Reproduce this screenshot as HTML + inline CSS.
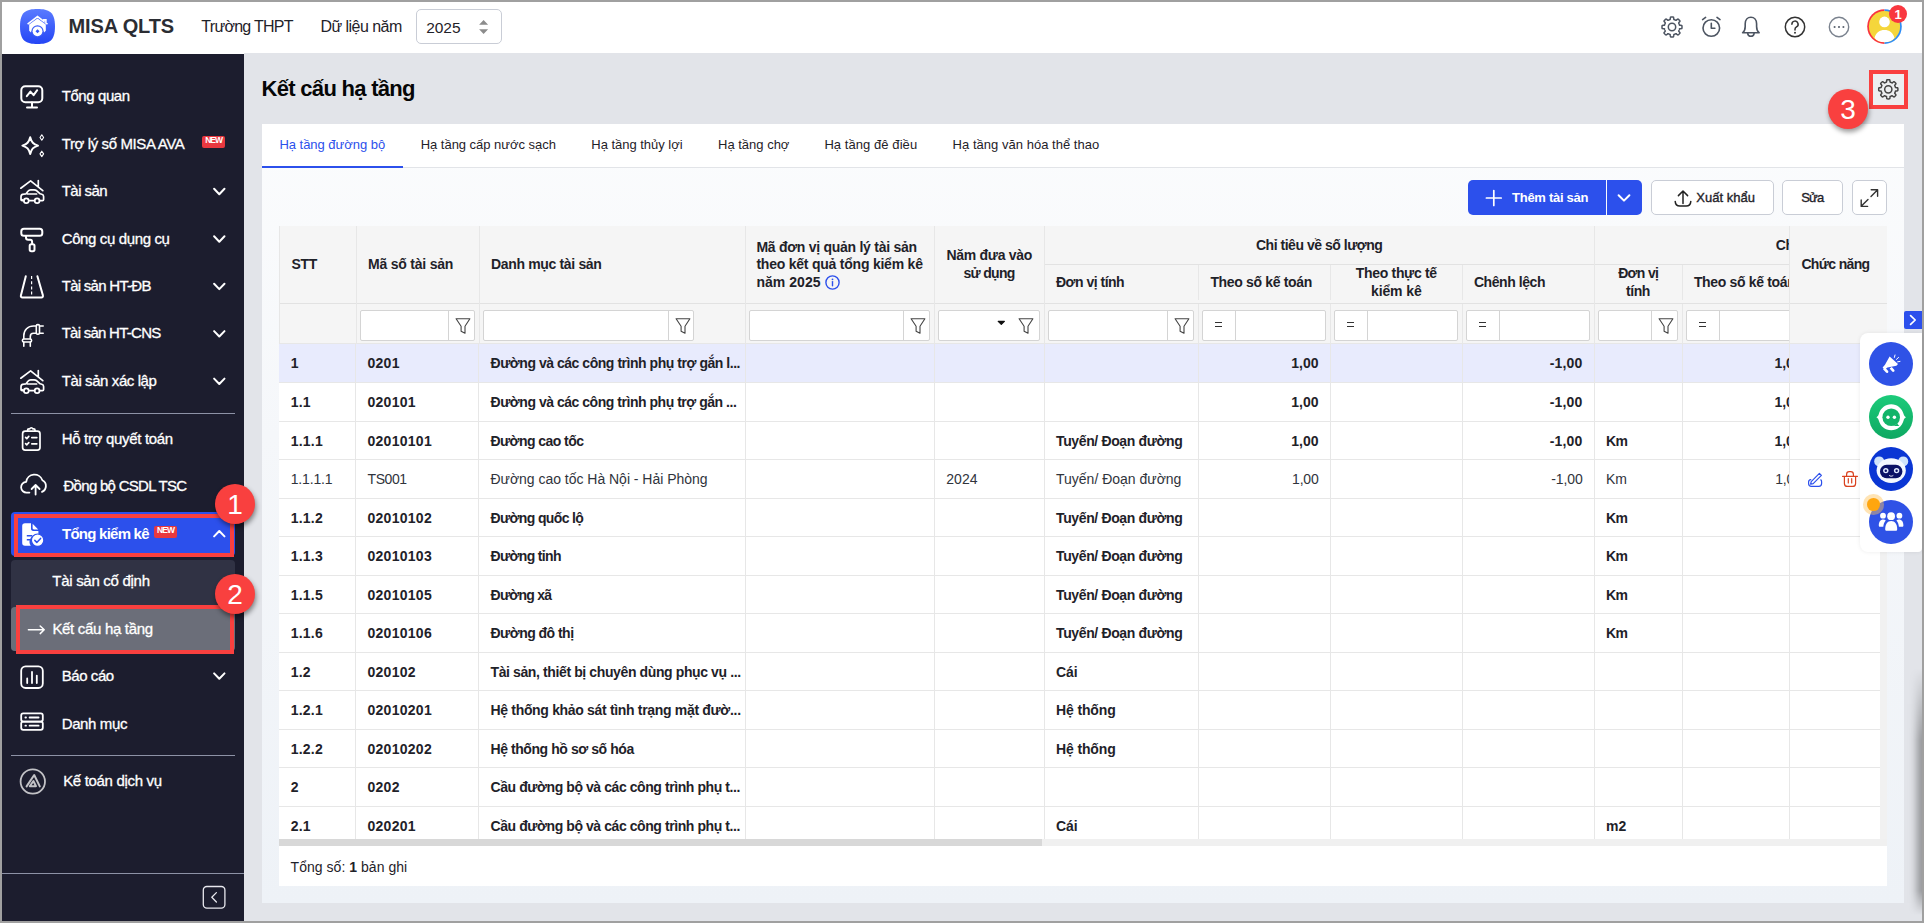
<!DOCTYPE html>
<html lang="vi"><head><meta charset="utf-8"><title>MISA QLTS - Kết cấu hạ tầng</title>
<style>
html,body{margin:0;padding:0;}
body{width:1924px;height:923px;overflow:hidden;position:relative;background:#a0a0a0;font-family:"Liberation Sans",sans-serif;}
div,svg{position:absolute;box-sizing:border-box;}
.t{white-space:nowrap;}
svg{overflow:visible;}
</style></head><body>
<div style="left:2px;top:2px;width:1920px;height:919px;background:#e2e4e9;"></div>
<div style="left:2px;top:2px;width:1920px;height:52px;background:#fff;"></div>
<svg style="left:20px;top:9px;" width="35" height="35" viewBox="0 0 35 35"><defs><linearGradient id="lg" x1="0" y1="0" x2="0" y2="1"><stop offset="0" stop-color="#5a7bff"/><stop offset="1" stop-color="#2445f5"/></linearGradient></defs>
<path d="M17.5 0C29 0 35 3 35 17.5S29 35 17.5 35 0 32 0 17.5 6 0 17.5 0Z" fill="url(#lg)"/>
<path d="M7.6 15.2 17.5 7.6l6.4 4.9v-1.6h2v3.1l1.6 1.2" fill="none" stroke="#fff" stroke-width="1.6" stroke-linejoin="miter"/>
<path d="M9.2 15.6 17.5 9.4l8.3 6.2v6.2l-1.8 1.6a7 7 0 0 0-13 0L9.2 21.8Z" fill="#fff"/>
<circle cx="17.5" cy="22.3" r="6.1" fill="#3a5cf8"/>
<circle cx="17.5" cy="22.3" r="4.9" fill="#fff"/>
<path d="M17.5 20.3l2 2-2 2-2-2z" fill="#3358f6"/></svg>
<div class="t" style="font-size:20px;line-height:22px;height:22px;color:#2b2d33;letter-spacing:-0.140px;font-weight:700;left:68.6px;top:15px;">MISA QLTS</div>
<div class="t" style="font-size:16px;line-height:17px;height:17px;color:#1f2229;letter-spacing:-0.713px;left:201.3px;top:18px;">Trường THPT</div>
<div class="t" style="font-size:16px;line-height:17px;height:17px;color:#1f2229;letter-spacing:-0.526px;left:320.4px;top:18px;">Dữ liệu năm</div>
<div style="left:416px;top:9px;width:86px;height:35px;background:#fff;border:1px solid #c9cdd6;border-radius:5px;"></div>
<div class="t" style="font-size:15.5px;line-height:17px;height:17px;color:#1f2229;letter-spacing:-0.045px;left:426.2px;top:19px;">2025</div>
<svg style="left:477px;top:18px;" width="13" height="18" viewBox="0 0 13 18"><path d="M6.600 1.900 11.100 6.800H2.100Z M6.600 16 11.100 11.200H2.100Z" fill="#8c8c8c"/></svg>
<div style="left:2px;top:54px;width:242px;height:867px;background:#1c1d2e;"></div>
<div style="left:11px;top:560px;width:224px;height:91px;background:#303244;border-radius:4px;"></div>
<div style="left:11px;top:607px;width:224px;height:44px;background:#6b6e79;border-radius:4px;"></div>
<div style="left:11px;top:512px;width:224px;height:44px;background:#2c50ec;border-radius:4px;"></div>
<div class="t" style="font-size:15px;line-height:17px;height:17px;color:#fff;letter-spacing:-0.414px;left:61.7px;top:87px;-webkit-text-stroke:.3px #fff;">Tổng quan</div>
<div class="t" style="font-size:15px;line-height:17px;height:17px;color:#fff;letter-spacing:-0.388px;left:61.7px;top:135px;-webkit-text-stroke:.3px #fff;">Trợ lý số MISA AVA</div>
<div class="t" style="font-size:15px;line-height:17px;height:17px;color:#fff;letter-spacing:-0.527px;left:61.7px;top:182px;-webkit-text-stroke:.3px #fff;">Tài sản</div>
<svg style="left:0;top:0" width="250" height="923"><path d="M214.10000000000002 188.79999999999998 219.3 194.2 224.5 188.79999999999998" fill="none" stroke="#fff" stroke-width="2" stroke-linecap="round" stroke-linejoin="round"/></svg>
<div class="t" style="font-size:15px;line-height:17px;height:17px;color:#fff;letter-spacing:-0.374px;left:61.7px;top:230px;-webkit-text-stroke:.3px #fff;">Công cụ dụng cụ</div>
<svg style="left:0;top:0" width="250" height="923"><path d="M214.10000000000002 236.29999999999998 219.3 241.7 224.5 236.29999999999998" fill="none" stroke="#fff" stroke-width="2" stroke-linecap="round" stroke-linejoin="round"/></svg>
<div class="t" style="font-size:15px;line-height:17px;height:17px;color:#fff;letter-spacing:-0.720px;left:61.7px;top:277px;-webkit-text-stroke:.3px #fff;">Tài sản HT-ĐB</div>
<svg style="left:0;top:0" width="250" height="923"><path d="M214.10000000000002 283.7 219.3 289.1 224.5 283.7" fill="none" stroke="#fff" stroke-width="2" stroke-linecap="round" stroke-linejoin="round"/></svg>
<div class="t" style="font-size:15px;line-height:17px;height:17px;color:#fff;letter-spacing:-0.742px;left:61.7px;top:324px;-webkit-text-stroke:.3px #fff;">Tài sản HT-CNS</div>
<svg style="left:0;top:0" width="250" height="923"><path d="M214.10000000000002 331.09999999999997 219.3 336.5 224.5 331.09999999999997" fill="none" stroke="#fff" stroke-width="2" stroke-linecap="round" stroke-linejoin="round"/></svg>
<div class="t" style="font-size:15px;line-height:17px;height:17px;color:#fff;letter-spacing:-0.406px;left:61.7px;top:372px;-webkit-text-stroke:.3px #fff;">Tài sản xác lập</div>
<svg style="left:0;top:0" width="250" height="923"><path d="M214.10000000000002 378.59999999999997 219.3 384.0 224.5 378.59999999999997" fill="none" stroke="#fff" stroke-width="2" stroke-linecap="round" stroke-linejoin="round"/></svg>
<div class="t" style="font-size:15px;line-height:17px;height:17px;color:#fff;letter-spacing:-0.321px;left:61.7px;top:430px;-webkit-text-stroke:.3px #fff;">Hỗ trợ quyết toán</div>
<div class="t" style="font-size:15px;line-height:17px;height:17px;color:#fff;letter-spacing:-0.420px;left:61.7px;top:667px;-webkit-text-stroke:.3px #fff;">Báo cáo</div>
<svg style="left:0;top:0" width="250" height="923"><path d="M214.10000000000002 673.4 219.3 678.8 224.5 673.4" fill="none" stroke="#fff" stroke-width="2" stroke-linecap="round" stroke-linejoin="round"/></svg>
<div class="t" style="font-size:15px;line-height:17px;height:17px;color:#fff;letter-spacing:-0.371px;left:61.7px;top:715px;-webkit-text-stroke:.3px #fff;">Danh mục</div>
<div class="t" style="font-size:15px;line-height:17px;height:17px;color:#fff;letter-spacing:-0.714px;left:63.5px;top:477px;-webkit-text-stroke:.3px #fff;">Đồng bộ CSDL TSC</div>
<div class="t" style="font-size:15px;line-height:17px;height:17px;color:#fff;letter-spacing:-0.327px;left:63.2px;top:772px;-webkit-text-stroke:.3px #fff;">Kế toán dịch vụ</div>
<div class="t" style="font-size:15px;line-height:17px;height:17px;color:#fff;letter-spacing:-0.755px;font-weight:700;left:62px;top:525px;">Tổng kiểm kê</div>
<svg style="left:0;top:0" width="250" height="923"><path d="M214.10000000000002 536.4 219.3 531.0 224.5 536.4" fill="none" stroke="#fff" stroke-width="2" stroke-linecap="round" stroke-linejoin="round"/></svg>
<div class="t" style="font-size:15px;line-height:17px;height:17px;color:#fff;letter-spacing:-0.288px;left:52.3px;top:572px;-webkit-text-stroke:.3px #fff;">Tài sản cố định</div>
<div class="t" style="font-size:15px;line-height:17px;height:17px;color:#fff;letter-spacing:-0.312px;left:52.4px;top:620px;-webkit-text-stroke:.3px #fff;">Kết cấu hạ tầng</div>
<div style="left:202px;top:136.3px;width:23.3px;height:11.5px;background:#e8383f;border-radius:2px;"></div>
<div class="t" style="font-size:8.5px;line-height:10px;height:10px;color:#fff;letter-spacing:-0.944px;font-weight:700;left:205.15px;top:135px;">NEW</div>
<div style="left:154.2px;top:525.6px;width:22.8px;height:12px;background:#e8383f;border-radius:2px;"></div>
<div class="t" style="font-size:8.5px;line-height:10px;height:10px;color:#fff;letter-spacing:-0.944px;font-weight:700;left:157.1px;top:525px;">NEW</div>
<div style="left:11px;top:413px;width:224px;height:1px;background:#8d92a6;"></div>
<div style="left:11px;top:755px;width:224px;height:1px;background:#8d92a6;"></div>
<div style="left:2px;top:873px;width:242px;height:1px;background:#8d92a6;"></div>
<svg style="left:0px;top:0px;" width="250" height="923" viewBox="0 0 250 923"><g fill="none" stroke="#fff" stroke-width="1.5" stroke-linecap="round" stroke-linejoin="round"><path d="M28.4 629.8H44M40.200 626l4 3.800-4 3.800"/></g></svg>
<svg style="left:0px;top:0px;" width="250" height="923" viewBox="0 0 250 923"><g fill="none" stroke="#fff" stroke-width="2" stroke-linecap="round" stroke-linejoin="round"><rect x="21.3" y="86.3" width="21" height="16" rx="4"/><path d="M32 102.6v4.6M27 107.4h10M26.8 96.2l3.6-4.6 3.2 3.6 3.6-5"/></g></svg>
<svg style="left:0px;top:0px;" width="250" height="923" viewBox="0 0 250 923"><g fill="none" stroke="#fff" stroke-width="2" stroke-linecap="round" stroke-linejoin="round"><path d="M30.2 137.2c1.4 5.2 3 6.9 7.8 8.4-4.8 1.5-6.4 3.2-7.8 8.4-1.4-5.2-3-6.9-7.8-8.4 4.8-1.5 6.4-3.2 7.8-8.4Z"/></g></svg>
<svg style="left:0px;top:0px;" width="250" height="923" viewBox="0 0 250 923"><g fill="none" stroke="#fff" stroke-width="1.1" stroke-linecap="round" stroke-linejoin="round"><path d="M41.8 134.8l1.8 2.7-1.8 2.7-1.8-2.7ZM41.8 151.2l1.8 2.7-1.8 2.7-1.8-2.7Z"/></g></svg>
<svg style="left:0px;top:180px;" width="250" height="60" viewBox="0 0 250 60"><g fill="none" stroke="#fff" stroke-width="1.7" stroke-linecap="round" stroke-linejoin="round"><path d="M20.8 8.2 30.6 0.9 42.8 10.6M38.3 0.6v6.2"/><path d="M21 19.4v-2.6c0-1.6 1-2.4 2.6-2.6l2.4-.4 2.2-2.8c.6-.8 1.4-1.2 2.4-1.2h3.6c1 0 1.8.4 2.6 1l3.4 3 1.6.4c1.2.3 1.8 1 1.8 2.2v3c0 .8-.4 1.2-1.200 1.200H39.6M34.600 20.600H28.800M23.800 20.600H22.200C21.400 20.600 21 20.200 21 19.400ZM27.6 14h9"/><circle cx="26.300" cy="20.800" r="2.400"/><circle cx="37.100" cy="20.800" r="2.400"/></g></svg>
<svg style="left:0px;top:370px;" width="250" height="60" viewBox="0 0 250 60"><g fill="none" stroke="#fff" stroke-width="1.7" stroke-linecap="round" stroke-linejoin="round"><path d="M20.8 8.2 30.6 0.9 42.8 10.6M38.3 0.6v6.2"/><path d="M21 19.4v-2.6c0-1.6 1-2.4 2.6-2.6l2.4-.4 2.2-2.8c.6-.8 1.4-1.2 2.4-1.2h3.6c1 0 1.8.4 2.6 1l3.4 3 1.6.4c1.2.3 1.8 1 1.8 2.2v3c0 .8-.4 1.2-1.200 1.200H39.6M34.600 20.600H28.800M23.800 20.600H22.200C21.400 20.600 21 20.200 21 19.400ZM27.6 14h9"/><circle cx="26.300" cy="20.800" r="2.400"/><circle cx="37.100" cy="20.800" r="2.400"/></g></svg>
<svg style="left:0px;top:0px;" width="250" height="923" viewBox="0 0 250 923"><g fill="none" stroke="#fff" stroke-width="2" stroke-linecap="round" stroke-linejoin="round"><rect x="21.3" y="228.8" width="21" height="7" rx="2.600"/><path d="M26 236v1.600c0 1.400.8 2.200 2.200 2.200h2c1.200 0 1.900.700 1.900 1.900v2"/><rect x="29.700" y="244.200" width="4.800" height="7" rx="1.600"/></g></svg>
<svg style="left:0px;top:0px;" width="250" height="923" viewBox="0 0 250 923"><g fill="none" stroke="#fff" stroke-width="2" stroke-linecap="round" stroke-linejoin="round"><path d="M25.800 276.200 20.900 295.400c-.3 1.200.3 2 1.500 2H41.400c1.200 0 1.800-.8 1.500-2L37.400 276.200"/></g></svg>
<svg style="left:0px;top:0px;" width="250" height="923" viewBox="0 0 250 923"><g fill="none" stroke="#fff" stroke-width="1.2" stroke-linecap="round" stroke-linejoin="round"><path d="M31.600 276v20" stroke-dasharray="3 2.200" stroke-linecap="butt"/></g></svg>
<svg style="left:0px;top:0px;" width="250" height="923" viewBox="0 0 250 923"><g fill="none" stroke="#fff" stroke-width="1.6" stroke-linecap="round" stroke-linejoin="round"><path d="M23.800 338.600v-2.800c0-5.800 4-9.800 9.800-9.800h2.400M30.300 338.600v-2.200c0-2 1.200-3.200 3.200-3.200h2.500M39.600 326h3.600M39.600 333.200h3.600M23.800 342.200v4M30.300 342.200v4"/><rect x="36.300" y="324.600" width="3.200" height="9.600" rx="1.400"/><rect x="22.400" y="339" width="9.200" height="3" rx="1.400"/></g></svg>
<svg style="left:0px;top:0px;" width="250" height="923" viewBox="0 0 250 923"><g fill="none" stroke="#fff" stroke-width="1.7" stroke-linecap="round" stroke-linejoin="round"><rect x="22.600" y="431.200" width="17.400" height="19" rx="2.600"/><path d="M27.600 431.200v-1.200c0-.8.400-1.200 1.200-1.200h1a1.600 1.600 0 0 1 3 0h1c.8 0 1.200.4 1.200 1.200v1.200M25.600 437.400l1.200 1.200 2-2.200M25.600 443.600l1.200 1.200 2-2.200M31.800 437.600h5M31.800 443.800h5"/></g></svg>
<svg style="left:0px;top:0px;" width="250" height="923" viewBox="0 0 250 923"><g fill="none" stroke="#fff" stroke-width="1.8" stroke-linecap="round" stroke-linejoin="round"><path d="M29.400 492.600h-2.600a5.400 5.400 0 0 1-.6-10.800 8.400 8.400 0 0 1 16.200-1.600 6.400 6.400 0 0 1-.4 11.600M35.600 494.600v-9.400M31.600 489l4-4 4 4"/></g></svg>
<svg style="left:0px;top:0px;" width="250" height="923" viewBox="0 0 250 923"><path d="M25 523.300h6v5.400c0 1.400.8 2.200 2.200 2.200h5.200v3.800a7.200 7.200 0 0 0-7.600 11H25c-1.800 0-2.800-1-2.800-2.800v-16.800c0-1.800 1-2.800 2.800-2.800Z" fill="#fff"/><path d="M32.600 523.800l5.600 5.600h-4.200c-.9 0-1.400-.5-1.400-1.400Z" fill="#fff"/><path d="M26.800 535.800h5.400M26.800 539.800h3.400" stroke="#2c50ec" stroke-width="1.500" fill="none"/><circle cx="37.600" cy="540.200" r="6.200" fill="#fff" stroke="#2c50ec" stroke-width="1.200"/><path d="M34.800 540.400l2 2 3.800-4" fill="none" stroke="#2c50ec" stroke-width="1.500" stroke-linecap="round" stroke-linejoin="round"/></svg>
<svg style="left:0px;top:0px;" width="250" height="923" viewBox="0 0 250 923"><g fill="none" stroke="#fff" stroke-width="1.8" stroke-linecap="round" stroke-linejoin="round"><rect x="21.200" y="666.400" width="21.600" height="21.600" rx="4.400"/><path d="M27.200 683v-4.600M32 683v-11M36.800 683v-7.400"/></g></svg>
<svg style="left:0px;top:0px;" width="250" height="923" viewBox="0 0 250 923"><g fill="none" stroke="#fff" stroke-width="1.8" stroke-linecap="round" stroke-linejoin="round"><rect x="21.200" y="713.400" width="21.600" height="8.200" rx="2"/><rect x="21.200" y="721.600" width="21.600" height="8.200" rx="2"/><path d="M25.400 717.500h.6M29.600 717.500h9M25.400 725.700h.6M29.600 725.700h9"/></g></svg>
<svg style="left:0px;top:0px;" width="250" height="923" viewBox="0 0 250 923"><g fill="none" stroke="#c2c2c6" stroke-width="1.8" stroke-linecap="round" stroke-linejoin="round"><circle cx="32.800" cy="781.500" r="12.200"/></g></svg>
<svg style="left:0px;top:0px;" width="250" height="923" viewBox="0 0 250 923"><g fill="none" stroke="#c2c2c6" stroke-width="2" stroke-linecap="round" stroke-linejoin="round"><path d="M26.600 786.400l7.600-11.400 5.600 11.400M29.800 786.200l3.600-5.200 2.600 5.200Z"/></g></svg>
<svg style="left:0px;top:0px;" width="250" height="923" viewBox="0 0 250 923"><g fill="none" stroke="#e8e8ee" stroke-width="1.3" stroke-linecap="round" stroke-linejoin="round"><rect x="203.300" y="886.500" width="21.600" height="21.600" rx="3.600"/><path d="M216.400 892.600l-4.600 4.700 4.600 4.700"/></g></svg>
<div style="left:14px;top:514px;width:220px;height:43px;border:4px solid #f9403f;"></div>
<div style="left:16px;top:605px;width:218px;height:49px;border:4px solid #f9403f;"></div>
<div style="left:215px;top:484px;width:40px;height:40px;background:#f9403f;border-radius:50%;box-shadow:1px 3px 5px rgba(0,0,0,.45);"></div>
<div class="t" style="font-size:28px;line-height:31px;height:31px;color:#fff;letter-spacing:0.000px;left:227.214px;top:489px;">1</div>
<div style="left:215px;top:574px;width:40px;height:40px;background:#f9403f;border-radius:50%;box-shadow:1px 3px 5px rgba(0,0,0,.45);"></div>
<div class="t" style="font-size:28px;line-height:31px;height:31px;color:#fff;letter-spacing:0.000px;left:227.214px;top:579px;">2</div>
<div style="left:244px;top:53px;width:1678px;height:1px;background:#e2e4e9;"></div>
<svg style="left:0;top:0" width="1924" height="923"><g fill="none" stroke="#4c5461" stroke-width="1.5" stroke-linecap="round" stroke-linejoin="round" ><path d="M1672.00 17.00 L1672.39 17.01 L1672.78 17.03 L1673.18 17.07 L1673.54 17.26 L1673.73 18.32 L1673.83 19.37 L1674.09 19.59 L1674.38 19.68 L1674.67 19.78 L1674.95 19.89 L1675.22 20.01 L1675.50 20.14 L1675.76 20.28 L1676.10 20.31 L1676.92 19.64 L1677.79 19.03 L1678.19 19.15 L1678.49 19.40 L1678.79 19.66 L1679.07 19.93 L1679.34 20.21 L1679.60 20.51 L1679.85 20.81 L1679.97 21.21 L1679.36 22.08 L1678.69 22.90 L1678.72 23.24 L1678.86 23.50 L1678.99 23.78 L1679.11 24.05 L1679.22 24.33 L1679.32 24.62 L1679.41 24.91 L1679.63 25.17 L1680.68 25.27 L1681.74 25.46 L1681.93 25.82 L1681.97 26.22 L1681.99 26.61 L1682.00 27.00 L1681.99 27.39 L1681.97 27.78 L1681.93 28.18 L1681.74 28.54 L1680.68 28.73 L1679.63 28.83 L1679.41 29.09 L1679.32 29.38 L1679.22 29.67 L1679.11 29.95 L1678.99 30.22 L1678.86 30.50 L1678.72 30.76 L1678.69 31.10 L1679.36 31.92 L1679.97 32.79 L1679.85 33.19 L1679.60 33.49 L1679.34 33.79 L1679.07 34.07 L1678.79 34.34 L1678.49 34.60 L1678.19 34.85 L1677.79 34.97 L1676.92 34.36 L1676.10 33.69 L1675.76 33.72 L1675.50 33.86 L1675.22 33.99 L1674.95 34.11 L1674.67 34.22 L1674.38 34.32 L1674.09 34.41 L1673.83 34.63 L1673.73 35.68 L1673.54 36.74 L1673.18 36.93 L1672.78 36.97 L1672.39 36.99 L1672.00 37.00 L1671.61 36.99 L1671.22 36.97 L1670.82 36.93 L1670.46 36.74 L1670.27 35.68 L1670.17 34.63 L1669.91 34.41 L1669.62 34.32 L1669.33 34.22 L1669.05 34.11 L1668.78 33.99 L1668.50 33.86 L1668.24 33.72 L1667.90 33.69 L1667.08 34.36 L1666.21 34.97 L1665.81 34.85 L1665.51 34.60 L1665.21 34.34 L1664.93 34.07 L1664.66 33.79 L1664.40 33.49 L1664.15 33.19 L1664.03 32.79 L1664.64 31.92 L1665.31 31.10 L1665.28 30.76 L1665.14 30.50 L1665.01 30.22 L1664.89 29.95 L1664.78 29.67 L1664.68 29.38 L1664.59 29.09 L1664.37 28.83 L1663.32 28.73 L1662.26 28.54 L1662.07 28.18 L1662.03 27.78 L1662.01 27.39 L1662.00 27.00 L1662.01 26.61 L1662.03 26.22 L1662.07 25.82 L1662.26 25.46 L1663.32 25.27 L1664.37 25.17 L1664.59 24.91 L1664.68 24.62 L1664.78 24.33 L1664.89 24.05 L1665.01 23.78 L1665.14 23.50 L1665.28 23.24 L1665.31 22.90 L1664.64 22.08 L1664.03 21.21 L1664.15 20.81 L1664.40 20.51 L1664.66 20.21 L1664.93 19.93 L1665.21 19.66 L1665.51 19.40 L1665.81 19.15 L1666.21 19.03 L1667.08 19.64 L1667.90 20.31 L1668.24 20.28 L1668.50 20.14 L1668.78 20.01 L1669.05 19.89 L1669.33 19.78 L1669.62 19.68 L1669.91 19.59 L1670.17 19.37 L1670.27 18.32 L1670.46 17.26 L1670.82 17.07 L1671.22 17.03 L1671.61 17.01Z" stroke-linejoin="round"/><circle cx="1672" cy="27" r="3.7"/></g></svg>
<svg style="left:0;top:0" width="1924" height="923"><g fill="none" stroke="#4c5461" stroke-width="1.6" stroke-linecap="round" stroke-linejoin="round" ><circle cx="1711.300" cy="28" r="8.300"/><path d="M1711.300 23.200v5h3.600M1702.600 19.600l3-2.200M1720 19.600l-3-2.200"/></g></svg>
<svg style="left:0;top:0" width="1924" height="923"><g fill="none" stroke="#4c5461" stroke-width="1.6" stroke-linecap="round" stroke-linejoin="round" ><path d="M1742.600 32.800h16.600c-2-1.600-2.600-3.400-2.600-6.400v-2.600c0-3.800-2.400-6.600-5.700-6.600s-5.700 2.800-5.700 6.600v2.600c0 3-.6 4.800-2.600 6.400ZM1747.700 33.600a3.250 3.250 0 0 0 6.400 0"/></g></svg>
<svg style="left:0;top:0" width="1924" height="923"><g fill="none" stroke="#333" stroke-width="1.5" stroke-linecap="round" stroke-linejoin="round" ><circle cx="1795" cy="27" r="9.700"/><path d="M1791.900 24.200a3.100 3.100 0 1 1 4.600 2.700c-1 .6-1.500 1.200-1.500 2.400v.7"/><path d="M1795 32.600v.2" stroke-width="1.900"/></g></svg>
<svg style="left:0;top:0" width="1924" height="923"><g fill="none" stroke="#7a828e" stroke-width="1.4" stroke-linecap="round" stroke-linejoin="round" ><circle cx="1839" cy="27" r="9.700"/></g></svg>
<svg style="left:0;top:0" width="1924" height="923"><circle cx="1834.600" cy="27" r="1.050" fill="#5a626e"/><circle cx="1839" cy="27" r="1.050" fill="#5a626e"/><circle cx="1843.400" cy="27" r="1.050" fill="#5a626e"/></svg>
<svg style="left:1866px;top:8px" width="38" height="38" viewBox="0 0 38 38"><defs><clipPath id="avc"><circle cx="18.500" cy="18.600" r="15.600"/></clipPath></defs>
<path d="M18.500 1.300a17.300 17.300 0 0 0 0 34.600Z" fill="#f9333f"/><path d="M18.500 1.300a17.300 17.300 0 0 1 0 34.600Z" fill="#2d8cf7"/>
<circle cx="18.500" cy="18.600" r="15.600" fill="#f5d63b"/><g clip-path="url(#avc)" fill="#fff"><circle cx="18.500" cy="13.900" r="5.300"/><path d="M8.500 30c1.400-5.400 5.200-8 10-8s8.600 2.600 10 8c-2.400 3-6 4.600-10 4.600s-7.600-1.600-10-4.600Z"/></g></svg>
<div style="left:1889px;top:4.6px;width:18px;height:18px;background:#f9373f;border-radius:50%;"></div>
<div class="t" style="font-size:13px;line-height:15px;height:15px;color:#fff;letter-spacing:0.000px;font-weight:700;left:1894.39px;top:7px;">1</div>
<div class="t" style="font-size:22px;line-height:25px;height:25px;color:#060606;letter-spacing:-0.707px;font-weight:700;left:261.6px;top:76px;">Kết cấu hạ tầng</div>
<div style="left:262px;top:124px;width:1642px;height:779px;background:linear-gradient(180deg,#fbfcfd 0%,#f5f7fa 40%,#eef2f7 100%);"></div>
<div style="left:262px;top:124px;width:1642px;height:44px;background:#fff;border-bottom:1px solid #e2e4e8;"></div>
<div style="left:262px;top:165.5px;width:141px;height:2.5px;background:#2c50ec;"></div>
<div class="t" style="font-size:13px;line-height:15px;height:15px;color:#2c50ec;letter-spacing:-0.021px;left:279.4px;top:137px;">Hạ tầng đường bộ</div>
<div class="t" style="font-size:13px;line-height:15px;height:15px;color:#1f2229;letter-spacing:-0.026px;left:420.7px;top:137px;">Hạ tầng cấp nước sạch</div>
<div class="t" style="font-size:13px;line-height:15px;height:15px;color:#1f2229;letter-spacing:-0.021px;left:591.3px;top:137px;">Hạ tầng thủy lợi</div>
<div class="t" style="font-size:13px;line-height:15px;height:15px;color:#1f2229;letter-spacing:0.000px;left:718px;top:137px;">Hạ tầng chợ</div>
<div class="t" style="font-size:13px;line-height:15px;height:15px;color:#1f2229;letter-spacing:0.067px;left:824.4px;top:137px;">Hạ tầng đê điều</div>
<div class="t" style="font-size:13px;line-height:15px;height:15px;color:#1f2229;letter-spacing:0.029px;left:952.6px;top:137px;">Hạ tầng văn hóa thể thao</div>
<div style="left:1468px;top:180px;width:138px;height:35px;background:#2c50ec;border-radius:5px 0 0 5px;"></div>
<div style="left:1607px;top:180px;width:35px;height:35px;background:#2c50ec;border-radius:0 5px 5px 0;"></div>
<svg style="left:0;top:0" width="1924" height="923"><g fill="none" stroke="#fff" stroke-width="1.7" stroke-linecap="round" stroke-linejoin="round" ><path d="M1486.400 198h14.800M1493.800 190.600v14.800"/></g></svg>
<svg style="left:0;top:0" width="1924" height="923"><g fill="none" stroke="#fff" stroke-width="2" stroke-linecap="round" stroke-linejoin="round" ><path d="M1618.600 195.200l5.400 5.400 5.400-5.400"/></g></svg>
<div class="t" style="font-size:13px;line-height:15px;height:15px;color:#fff;letter-spacing:-0.289px;font-weight:700;left:1512.1px;top:190px;">Thêm tài sản</div>
<div style="left:1651px;top:180px;width:123px;height:35px;background:#fff;border:1px solid #c9cdd6;border-radius:5px;"></div>
<div style="left:1782px;top:180px;width:61px;height:35px;background:#fff;border:1px solid #c9cdd6;border-radius:5px;"></div>
<div style="left:1852px;top:180px;width:35px;height:35px;background:#fff;border:1px solid #c9cdd6;border-radius:5px;"></div>
<svg style="left:0;top:0" width="1924" height="923"><g fill="none" stroke="#222" stroke-width="1.5" stroke-linecap="round" stroke-linejoin="round" ><path d="M1683 203.600v-12.400M1678.400 195.600l4.600-4.600 4.600 4.600M1675.200 201.400c.2 3.200 1.600 4.600 4.600 4.600h6.400c3 0 4.400-1.400 4.600-4.600"/></g></svg>
<div class="t" style="font-size:13px;line-height:15px;height:15px;color:#1f2229;letter-spacing:0.028px;left:1696.2px;top:190px;-webkit-text-stroke:.35px #1f2229;">Xuất khẩu</div>
<div class="t" style="font-size:13px;line-height:15px;height:15px;color:#1f2229;letter-spacing:-0.735px;left:1801.2px;top:190px;-webkit-text-stroke:.35px #1f2229;">Sửa</div>
<svg style="left:0;top:0" width="1924" height="923"><g fill="none" stroke="#333" stroke-width="1.4" stroke-linecap="round" stroke-linejoin="round" ><path d="M1861.400 206l6.600-6.600M1871 196.400l6.400-6.400M1871.200 189.800h6.400v6.400M1867.600 206.400h-6.400v-6.400"/></g></svg>
<div style="left:1869px;top:70px;width:39px;height:39px;background:#eceef0;border:4px solid #f9403f;"></div>
<svg style="left:0;top:0" width="1924" height="923"><g fill="none" stroke="#444" stroke-width="1.5" stroke-linecap="round" stroke-linejoin="round" ><path d="M1888.30 79.70 L1888.68 79.71 L1889.05 79.73 L1889.43 79.77 L1889.78 79.95 L1889.96 80.97 L1890.06 81.98 L1890.31 82.19 L1890.58 82.27 L1890.86 82.36 L1891.13 82.47 L1891.39 82.59 L1891.66 82.71 L1891.91 82.85 L1892.23 82.88 L1893.02 82.24 L1893.86 81.64 L1894.24 81.76 L1894.53 82.00 L1894.82 82.25 L1895.09 82.51 L1895.35 82.78 L1895.60 83.07 L1895.84 83.36 L1895.96 83.74 L1895.36 84.58 L1894.72 85.37 L1894.75 85.69 L1894.89 85.94 L1895.01 86.21 L1895.13 86.47 L1895.24 86.74 L1895.33 87.02 L1895.41 87.29 L1895.62 87.54 L1896.63 87.64 L1897.65 87.82 L1897.83 88.17 L1897.87 88.55 L1897.89 88.92 L1897.90 89.30 L1897.89 89.68 L1897.87 90.05 L1897.83 90.43 L1897.65 90.78 L1896.63 90.96 L1895.62 91.06 L1895.41 91.31 L1895.33 91.58 L1895.24 91.86 L1895.13 92.13 L1895.01 92.39 L1894.89 92.66 L1894.75 92.91 L1894.72 93.23 L1895.36 94.02 L1895.96 94.86 L1895.84 95.24 L1895.60 95.53 L1895.35 95.82 L1895.09 96.09 L1894.82 96.35 L1894.53 96.60 L1894.24 96.84 L1893.86 96.96 L1893.02 96.36 L1892.23 95.72 L1891.91 95.75 L1891.66 95.89 L1891.39 96.01 L1891.13 96.13 L1890.86 96.24 L1890.58 96.33 L1890.31 96.41 L1890.06 96.62 L1889.96 97.63 L1889.78 98.65 L1889.43 98.83 L1889.05 98.87 L1888.68 98.89 L1888.30 98.90 L1887.92 98.89 L1887.55 98.87 L1887.17 98.83 L1886.82 98.65 L1886.64 97.63 L1886.54 96.62 L1886.29 96.41 L1886.02 96.33 L1885.74 96.24 L1885.47 96.13 L1885.21 96.01 L1884.94 95.89 L1884.69 95.75 L1884.37 95.72 L1883.58 96.36 L1882.74 96.96 L1882.36 96.84 L1882.07 96.60 L1881.78 96.35 L1881.51 96.09 L1881.25 95.82 L1881.00 95.53 L1880.76 95.24 L1880.64 94.86 L1881.24 94.02 L1881.88 93.23 L1881.85 92.91 L1881.71 92.66 L1881.59 92.39 L1881.47 92.13 L1881.36 91.86 L1881.27 91.58 L1881.19 91.31 L1880.98 91.06 L1879.97 90.96 L1878.95 90.78 L1878.77 90.43 L1878.73 90.05 L1878.71 89.68 L1878.70 89.30 L1878.71 88.92 L1878.73 88.55 L1878.77 88.17 L1878.95 87.82 L1879.97 87.64 L1880.98 87.54 L1881.19 87.29 L1881.27 87.02 L1881.36 86.74 L1881.47 86.47 L1881.59 86.21 L1881.71 85.94 L1881.85 85.69 L1881.88 85.37 L1881.24 84.58 L1880.64 83.74 L1880.76 83.36 L1881.00 83.07 L1881.25 82.78 L1881.51 82.51 L1881.78 82.25 L1882.07 82.00 L1882.36 81.76 L1882.74 81.64 L1883.58 82.24 L1884.37 82.88 L1884.69 82.85 L1884.94 82.71 L1885.21 82.59 L1885.47 82.47 L1885.74 82.36 L1886.02 82.27 L1886.29 82.19 L1886.54 81.98 L1886.64 80.97 L1886.82 79.95 L1887.17 79.77 L1887.55 79.73 L1887.92 79.71Z" stroke-linejoin="round"/><circle cx="1888.3" cy="89.3" r="3.6"/></g></svg>
<div style="left:1828px;top:88.7px;width:40px;height:40px;background:#f9403f;border-radius:50%;box-shadow:1px 3px 5px rgba(0,0,0,.4);"></div>
<div class="t" style="font-size:28px;line-height:31px;height:31px;color:#fff;letter-spacing:0.000px;left:1840.21px;top:94px;">3</div>
<div style="left:279px;top:226px;width:1608px;height:660px;background:#fff;overflow:hidden;">
<div style="left:0px;top:0px;width:1608px;height:117px;background:#f5f5f5;"></div>
<div style="left:0px;top:117px;width:1608px;height:39px;background:#e8ebfd;"></div>
<div style="left:0px;top:77px;width:1608px;height:1px;background:#e2e2e2;"></div>
<div style="left:765px;top:38px;width:745px;height:1px;background:#e2e2e2;"></div>
<div style="left:0px;top:117px;width:1608px;height:1px;background:#e7e7e7;"></div>
<div style="left:0px;top:156px;width:1608px;height:1px;background:#e7e7e7;"></div>
<div style="left:0px;top:195px;width:1608px;height:1px;background:#e7e7e7;"></div>
<div style="left:0px;top:233px;width:1608px;height:1px;background:#e7e7e7;"></div>
<div style="left:0px;top:272px;width:1608px;height:1px;background:#e7e7e7;"></div>
<div style="left:0px;top:310px;width:1608px;height:1px;background:#e7e7e7;"></div>
<div style="left:0px;top:349px;width:1608px;height:1px;background:#e7e7e7;"></div>
<div style="left:0px;top:387px;width:1608px;height:1px;background:#e7e7e7;"></div>
<div style="left:0px;top:426px;width:1608px;height:1px;background:#e7e7e7;"></div>
<div style="left:0px;top:464px;width:1608px;height:1px;background:#e7e7e7;"></div>
<div style="left:0px;top:503px;width:1608px;height:1px;background:#e7e7e7;"></div>
<div style="left:0px;top:541px;width:1608px;height:1px;background:#e7e7e7;"></div>
<div style="left:0px;top:580px;width:1608px;height:1px;background:#e7e7e7;"></div>
<div style="left:0px;top:619px;width:1608px;height:1px;background:#e7e7e7;"></div>
<div style="left:0px;top:0px;width:1px;height:117px;background:#e7e7e7;"></div>
<div style="left:77px;top:0px;width:1px;height:117px;background:#e7e7e7;"></div>
<div style="left:76px;top:117px;width:1px;height:496px;background:#e7e7e7;"></div>
<div style="left:200px;top:0px;width:1px;height:117px;background:#e7e7e7;"></div>
<div style="left:199px;top:117px;width:1px;height:496px;background:#e7e7e7;"></div>
<div style="left:466px;top:0px;width:1px;height:117px;background:#e7e7e7;"></div>
<div style="left:466px;top:117px;width:1px;height:496px;background:#e7e7e7;"></div>
<div style="left:655px;top:0px;width:1px;height:117px;background:#e7e7e7;"></div>
<div style="left:655px;top:117px;width:1px;height:496px;background:#e7e7e7;"></div>
<div style="left:765px;top:0px;width:1px;height:117px;background:#e7e7e7;"></div>
<div style="left:765px;top:117px;width:1px;height:496px;background:#e7e7e7;"></div>
<div style="left:919px;top:39px;width:1px;height:35px;background:#e7e7e7;"></div>
<div style="left:919px;top:78px;width:1px;height:39px;background:#e7e7e7;"></div>
<div style="left:919px;top:117px;width:1px;height:496px;background:#e7e7e7;"></div>
<div style="left:1051px;top:39px;width:1px;height:35px;background:#e7e7e7;"></div>
<div style="left:1051px;top:78px;width:1px;height:39px;background:#e7e7e7;"></div>
<div style="left:1051px;top:117px;width:1px;height:496px;background:#e7e7e7;"></div>
<div style="left:1183px;top:39px;width:1px;height:35px;background:#e7e7e7;"></div>
<div style="left:1183px;top:78px;width:1px;height:39px;background:#e7e7e7;"></div>
<div style="left:1183px;top:117px;width:1px;height:496px;background:#e7e7e7;"></div>
<div style="left:1315px;top:0px;width:1px;height:117px;background:#e7e7e7;"></div>
<div style="left:1315px;top:117px;width:1px;height:496px;background:#e7e7e7;"></div>
<div style="left:1403px;top:39px;width:1px;height:35px;background:#e7e7e7;"></div>
<div style="left:1403px;top:78px;width:1px;height:39px;background:#e7e7e7;"></div>
<div style="left:1403px;top:117px;width:1px;height:496px;background:#e7e7e7;"></div>
<div class="t" style="font-size:14px;line-height:16px;height:16px;color:#1f2229;letter-spacing:-0.314px;font-weight:700;left:12.4px;top:30px;">STT</div>
<div class="t" style="font-size:14px;line-height:16px;height:16px;color:#1f2229;letter-spacing:-0.224px;font-weight:700;left:89.1px;top:30px;">Mã số tài sản</div>
<div class="t" style="font-size:14px;line-height:16px;height:16px;color:#1f2229;letter-spacing:-0.339px;font-weight:700;left:212px;top:30px;">Danh mục tài sản</div>
<div class="t" style="font-size:14px;line-height:16px;height:16px;color:#1f2229;letter-spacing:-0.272px;font-weight:700;left:477.4px;top:13px;">Mã đơn vị quản lý tài sản</div>
<div class="t" style="font-size:14px;line-height:16px;height:16px;color:#1f2229;letter-spacing:-0.225px;font-weight:700;left:477.4px;top:30px;">theo kết quả tổng kiểm kê</div>
<div class="t" style="font-size:14px;line-height:16px;height:16px;color:#1f2229;letter-spacing:0.047px;font-weight:700;left:477.4px;top:48px;">năm 2025</div>
<svg style="left:546.3px;top:48.9px" width="15" height="15" viewBox="0 0 15 15"><circle cx="7.500" cy="7.500" r="6.600" fill="none" stroke="#2c50ec" stroke-width="1.400"/><path d="M7.500 6.600v4.200" stroke="#2c50ec" stroke-width="1.400" stroke-linecap="round"/><circle cx="7.500" cy="4.300" r=".900" fill="#2c50ec"/></svg>
<div class="t" style="font-size:14px;line-height:16px;height:16px;color:#1f2229;letter-spacing:-0.293px;font-weight:700;left:667.55px;top:21px;">Năm đưa vào</div>
<div class="t" style="font-size:14px;line-height:16px;height:16px;color:#1f2229;letter-spacing:-0.689px;font-weight:700;left:684.5px;top:39px;">sử dụng</div>
<div class="t" style="font-size:14px;line-height:16px;height:16px;color:#1f2229;letter-spacing:-0.475px;font-weight:700;left:976.95px;top:11px;">Chỉ tiêu về số lượng</div>
<div class="t" style="font-size:14px;line-height:16px;height:16px;color:#1f2229;letter-spacing:-0.511px;font-weight:700;left:777px;top:48px;">Đơn vị tính</div>
<div class="t" style="font-size:14px;line-height:16px;height:16px;color:#1f2229;letter-spacing:-0.331px;font-weight:700;left:931.4px;top:48px;">Theo số kế toán</div>
<div class="t" style="font-size:14px;line-height:16px;height:16px;color:#1f2229;letter-spacing:-0.326px;font-weight:700;left:1076.85px;top:39px;">Theo thực tế</div>
<div class="t" style="font-size:14px;line-height:16px;height:16px;color:#1f2229;letter-spacing:-0.096px;font-weight:700;left:1091.95px;top:57px;">kiểm kê</div>
<div class="t" style="font-size:14px;line-height:16px;height:16px;color:#1f2229;letter-spacing:-0.426px;font-weight:700;left:1194.9px;top:48px;">Chênh lệch</div>
<div class="t" style="font-size:14px;line-height:16px;height:16px;color:#1f2229;letter-spacing:-0.680px;font-weight:700;left:1339.15px;top:39px;">Đơn vị</div>
<div class="t" style="font-size:14px;line-height:16px;height:16px;color:#1f2229;letter-spacing:-0.439px;font-weight:700;left:1347.05px;top:57px;">tính</div>
<div class="t" style="font-size:14px;line-height:16px;height:16px;color:#1f2229;letter-spacing:-0.331px;font-weight:700;left:1414.9px;top:48px;">Theo số kế toán</div>
<div class="t" style="font-size:14px;line-height:16px;height:16px;color:#1f2229;letter-spacing:-0.386px;font-weight:700;left:1496.7px;top:11px;">Chỉ tiêu về giá trị</div>
<div style="left:81px;top:84px;width:115px;height:31px;background:#fff;border:1px solid #d4d4d4;border-radius:2px;"></div>
<div style="left:168.9px;top:84.5px;width:1px;height:30px;background:#d4d4d4;"></div>
<svg style="left:176px;top:91.5px" width="16" height="16" viewBox="0 0 16 16"><path d="M1.100 .700H14.900L10 8.200V15.300L6.100 13.300V8.200Z" fill="none" stroke="#444" stroke-width="1.100" stroke-linejoin="round"/></svg>
<div style="left:204px;top:84px;width:211px;height:31px;background:#fff;border:1px solid #d4d4d4;border-radius:2px;"></div>
<div style="left:388.8px;top:84.5px;width:1px;height:30px;background:#d4d4d4;"></div>
<svg style="left:395.5px;top:91.5px" width="16" height="16" viewBox="0 0 16 16"><path d="M1.100 .700H14.900L10 8.200V15.300L6.100 13.300V8.200Z" fill="none" stroke="#444" stroke-width="1.100" stroke-linejoin="round"/></svg>
<div style="left:470px;top:84px;width:181px;height:31px;background:#fff;border:1px solid #d4d4d4;border-radius:2px;"></div>
<div style="left:624px;top:84.5px;width:1px;height:30px;background:#d4d4d4;"></div>
<svg style="left:630.9px;top:91.5px" width="16" height="16" viewBox="0 0 16 16"><path d="M1.100 .700H14.900L10 8.200V15.300L6.100 13.300V8.200Z" fill="none" stroke="#444" stroke-width="1.100" stroke-linejoin="round"/></svg>
<div style="left:659px;top:84px;width:102px;height:31px;background:#fff;border:1px solid #d4d4d4;border-radius:2px;"></div>
<svg style="left:738.9px;top:91.5px" width="16" height="16" viewBox="0 0 16 16"><path d="M1.100 .700H14.900L10 8.200V15.300L6.100 13.300V8.200Z" fill="none" stroke="#444" stroke-width="1.100" stroke-linejoin="round"/></svg>
<svg style="left:717.8px;top:93.8px" width="8.600" height="5.800" viewBox="0 0 10 6"><path d="M1.400 1.200h7.200L5 4.800Z" fill="#111" stroke="#111" stroke-width="1.400" stroke-linejoin="round"/></svg>
<div style="left:769px;top:84px;width:146px;height:31px;background:#fff;border:1px solid #d4d4d4;border-radius:2px;"></div>
<div style="left:888px;top:84.5px;width:1px;height:30px;background:#d4d4d4;"></div>
<svg style="left:894.8px;top:91.5px" width="16" height="16" viewBox="0 0 16 16"><path d="M1.100 .700H14.900L10 8.200V15.300L6.100 13.300V8.200Z" fill="none" stroke="#444" stroke-width="1.100" stroke-linejoin="round"/></svg>
<div style="left:923px;top:84px;width:124px;height:31px;background:#fff;border:1px solid #d4d4d4;border-radius:2px;"></div>
<div style="left:955.9px;top:84.5px;width:1px;height:30px;background:#d4d4d4;"></div>
<div style="left:936.25px;top:96.4px;width:7.2px;height:1.1px;background:#333;"></div>
<div style="left:936.25px;top:100.2px;width:7.2px;height:1.1px;background:#333;"></div>
<div style="left:1055px;top:84px;width:124px;height:31px;background:#fff;border:1px solid #d4d4d4;border-radius:2px;"></div>
<div style="left:1087.6px;top:84.5px;width:1px;height:30px;background:#d4d4d4;"></div>
<div style="left:1068.15px;top:96.4px;width:7.2px;height:1.1px;background:#333;"></div>
<div style="left:1068.15px;top:100.2px;width:7.2px;height:1.1px;background:#333;"></div>
<div style="left:1187px;top:84px;width:124px;height:31px;background:#fff;border:1px solid #d4d4d4;border-radius:2px;"></div>
<div style="left:1219.9px;top:84.5px;width:1px;height:30px;background:#d4d4d4;"></div>
<div style="left:1200.3px;top:96.4px;width:7.2px;height:1.1px;background:#333;"></div>
<div style="left:1200.3px;top:100.2px;width:7.2px;height:1.1px;background:#333;"></div>
<div style="left:1407px;top:84px;width:124px;height:31px;background:#fff;border:1px solid #d4d4d4;border-radius:2px;"></div>
<div style="left:1439.8px;top:84.5px;width:1px;height:30px;background:#d4d4d4;"></div>
<div style="left:1420.25px;top:96.4px;width:7.2px;height:1.1px;background:#333;"></div>
<div style="left:1420.25px;top:100.2px;width:7.2px;height:1.1px;background:#333;"></div>
<div style="left:1319px;top:84px;width:80px;height:31px;background:#fff;border:1px solid #d4d4d4;border-radius:2px;"></div>
<div style="left:1372.1px;top:84.5px;width:1px;height:30px;background:#d4d4d4;"></div>
<svg style="left:1379px;top:91.5px" width="16" height="16" viewBox="0 0 16 16"><path d="M1.100 .700H14.900L10 8.200V15.300L6.100 13.300V8.200Z" fill="none" stroke="#444" stroke-width="1.100" stroke-linejoin="round"/></svg>
<div class="t" style="font-size:14px;line-height:16px;height:16px;color:#1f2229;letter-spacing:0.273px;font-weight:700;left:11.7px;top:129px;">1</div>
<div class="t" style="font-size:14px;line-height:16px;height:16px;color:#1f2229;letter-spacing:0.273px;font-weight:700;left:88.5px;top:129px;">0201</div>
<div class="t" style="font-size:14px;line-height:16px;height:16px;color:#1f2229;letter-spacing:-0.464px;font-weight:700;left:211.5px;top:129px;">Đường và các công trình phụ trợ gắn l...</div>
<div class="t" style="font-size:14px;line-height:16px;height:16px;color:#1f2229;letter-spacing:-0.062px;font-weight:700;left:1012.36px;top:129px;">1,00</div>
<div class="t" style="font-size:14px;line-height:16px;height:16px;color:#1f2229;letter-spacing:0.158px;font-weight:700;left:1270.74px;top:129px;">-1,00</div>
<div class="t" style="font-size:14px;line-height:16px;height:16px;color:#1f2229;letter-spacing:-0.062px;font-weight:700;left:1495.56px;top:129px;">1,00</div>
<div class="t" style="font-size:14px;line-height:16px;height:16px;color:#1f2229;letter-spacing:0.227px;font-weight:700;left:11.7px;top:168px;">1.1</div>
<div class="t" style="font-size:14px;line-height:16px;height:16px;color:#1f2229;letter-spacing:0.273px;font-weight:700;left:88.5px;top:168px;">020101</div>
<div class="t" style="font-size:14px;line-height:16px;height:16px;color:#1f2229;letter-spacing:-0.469px;font-weight:700;left:211.5px;top:168px;">Đường và các công trình phụ trợ gắn ...</div>
<div class="t" style="font-size:14px;line-height:16px;height:16px;color:#1f2229;letter-spacing:-0.062px;font-weight:700;left:1012.36px;top:168px;">1,00</div>
<div class="t" style="font-size:14px;line-height:16px;height:16px;color:#1f2229;letter-spacing:0.158px;font-weight:700;left:1270.74px;top:168px;">-1,00</div>
<div class="t" style="font-size:14px;line-height:16px;height:16px;color:#1f2229;letter-spacing:-0.062px;font-weight:700;left:1495.56px;top:168px;">1,00</div>
<div class="t" style="font-size:14px;line-height:16px;height:16px;color:#1f2229;letter-spacing:0.218px;font-weight:700;left:11.7px;top:207px;">1.1.1</div>
<div class="t" style="font-size:14px;line-height:16px;height:16px;color:#1f2229;letter-spacing:0.273px;font-weight:700;left:88.5px;top:207px;">02010101</div>
<div class="t" style="font-size:14px;line-height:16px;height:16px;color:#1f2229;letter-spacing:-0.562px;font-weight:700;left:211.5px;top:207px;">Đường cao tốc</div>
<div class="t" style="font-size:14px;line-height:16px;height:16px;color:#1f2229;letter-spacing:-0.365px;font-weight:700;left:777px;top:207px;">Tuyến/ Đoạn đường</div>
<div class="t" style="font-size:14px;line-height:16px;height:16px;color:#1f2229;letter-spacing:-0.062px;font-weight:700;left:1012.36px;top:207px;">1,00</div>
<div class="t" style="font-size:14px;line-height:16px;height:16px;color:#1f2229;letter-spacing:0.158px;font-weight:700;left:1270.74px;top:207px;">-1,00</div>
<div class="t" style="font-size:14px;line-height:16px;height:16px;color:#1f2229;letter-spacing:-0.779px;font-weight:700;left:1327.1px;top:207px;">Km</div>
<div class="t" style="font-size:14px;line-height:16px;height:16px;color:#1f2229;letter-spacing:-0.062px;font-weight:700;left:1495.56px;top:207px;">1,00</div>
<div class="t" style="font-size:14px;line-height:16px;height:16px;color:#30343c;letter-spacing:-0.153px;left:11.7px;top:245px;">1.1.1.1</div>
<div class="t" style="font-size:14px;line-height:16px;height:16px;color:#30343c;letter-spacing:-0.410px;left:88.5px;top:245px;">TS001</div>
<div class="t" style="font-size:14px;line-height:16px;height:16px;color:#30343c;letter-spacing:-0.024px;left:211.5px;top:245px;">Đường cao tốc Hà Nội - Hải Phòng</div>
<div class="t" style="font-size:14px;line-height:16px;height:16px;color:#30343c;letter-spacing:0.014px;left:667.3px;top:245px;">2024</div>
<div class="t" style="font-size:14px;line-height:16px;height:16px;color:#30343c;letter-spacing:-0.002px;left:777px;top:245px;">Tuyến/ Đoạn đường</div>
<div class="t" style="font-size:14px;line-height:16px;height:16px;color:#30343c;letter-spacing:-0.212px;left:1013.11px;top:245px;">1,00</div>
<div class="t" style="font-size:14px;line-height:16px;height:16px;color:#30343c;letter-spacing:-0.102px;left:1272.3px;top:245px;">-1,00</div>
<div class="t" style="font-size:14px;line-height:16px;height:16px;color:#30343c;letter-spacing:-0.300px;left:1327.1px;top:245px;">Km</div>
<div class="t" style="font-size:14px;line-height:16px;height:16px;color:#30343c;letter-spacing:-0.212px;left:1496.31px;top:245px;">1,00</div>
<div class="t" style="font-size:14px;line-height:16px;height:16px;color:#1f2229;letter-spacing:0.218px;font-weight:700;left:11.7px;top:284px;">1.1.2</div>
<div class="t" style="font-size:14px;line-height:16px;height:16px;color:#1f2229;letter-spacing:0.273px;font-weight:700;left:88.5px;top:284px;">02010102</div>
<div class="t" style="font-size:14px;line-height:16px;height:16px;color:#1f2229;letter-spacing:-0.636px;font-weight:700;left:211.5px;top:284px;">Đường quốc lộ</div>
<div class="t" style="font-size:14px;line-height:16px;height:16px;color:#1f2229;letter-spacing:-0.365px;font-weight:700;left:777px;top:284px;">Tuyến/ Đoạn đường</div>
<div class="t" style="font-size:14px;line-height:16px;height:16px;color:#1f2229;letter-spacing:-0.779px;font-weight:700;left:1327.1px;top:284px;">Km</div>
<div class="t" style="font-size:14px;line-height:16px;height:16px;color:#1f2229;letter-spacing:0.218px;font-weight:700;left:11.7px;top:322px;">1.1.3</div>
<div class="t" style="font-size:14px;line-height:16px;height:16px;color:#1f2229;letter-spacing:0.273px;font-weight:700;left:88.5px;top:322px;">02010103</div>
<div class="t" style="font-size:14px;line-height:16px;height:16px;color:#1f2229;letter-spacing:-0.655px;font-weight:700;left:211.5px;top:322px;">Đường tỉnh</div>
<div class="t" style="font-size:14px;line-height:16px;height:16px;color:#1f2229;letter-spacing:-0.365px;font-weight:700;left:777px;top:322px;">Tuyến/ Đoạn đường</div>
<div class="t" style="font-size:14px;line-height:16px;height:16px;color:#1f2229;letter-spacing:-0.779px;font-weight:700;left:1327.1px;top:322px;">Km</div>
<div class="t" style="font-size:14px;line-height:16px;height:16px;color:#1f2229;letter-spacing:0.218px;font-weight:700;left:11.7px;top:361px;">1.1.5</div>
<div class="t" style="font-size:14px;line-height:16px;height:16px;color:#1f2229;letter-spacing:0.273px;font-weight:700;left:88.5px;top:361px;">02010105</div>
<div class="t" style="font-size:14px;line-height:16px;height:16px;color:#1f2229;letter-spacing:-0.733px;font-weight:700;left:211.5px;top:361px;">Đường xã</div>
<div class="t" style="font-size:14px;line-height:16px;height:16px;color:#1f2229;letter-spacing:-0.365px;font-weight:700;left:777px;top:361px;">Tuyến/ Đoạn đường</div>
<div class="t" style="font-size:14px;line-height:16px;height:16px;color:#1f2229;letter-spacing:-0.779px;font-weight:700;left:1327.1px;top:361px;">Km</div>
<div class="t" style="font-size:14px;line-height:16px;height:16px;color:#1f2229;letter-spacing:0.218px;font-weight:700;left:11.7px;top:399px;">1.1.6</div>
<div class="t" style="font-size:14px;line-height:16px;height:16px;color:#1f2229;letter-spacing:0.273px;font-weight:700;left:88.5px;top:399px;">02010106</div>
<div class="t" style="font-size:14px;line-height:16px;height:16px;color:#1f2229;letter-spacing:-0.524px;font-weight:700;left:211.5px;top:399px;">Đường đô thị</div>
<div class="t" style="font-size:14px;line-height:16px;height:16px;color:#1f2229;letter-spacing:-0.365px;font-weight:700;left:777px;top:399px;">Tuyến/ Đoạn đường</div>
<div class="t" style="font-size:14px;line-height:16px;height:16px;color:#1f2229;letter-spacing:-0.779px;font-weight:700;left:1327.1px;top:399px;">Km</div>
<div class="t" style="font-size:14px;line-height:16px;height:16px;color:#1f2229;letter-spacing:0.227px;font-weight:700;left:11.7px;top:438px;">1.2</div>
<div class="t" style="font-size:14px;line-height:16px;height:16px;color:#1f2229;letter-spacing:0.273px;font-weight:700;left:88.5px;top:438px;">020102</div>
<div class="t" style="font-size:14px;line-height:16px;height:16px;color:#1f2229;letter-spacing:-0.386px;font-weight:700;left:211.5px;top:438px;">Tài sản, thiết bị chuyên dùng phục vụ ...</div>
<div class="t" style="font-size:14px;line-height:16px;height:16px;color:#1f2229;letter-spacing:-0.129px;font-weight:700;left:777px;top:438px;">Cái</div>
<div class="t" style="font-size:14px;line-height:16px;height:16px;color:#1f2229;letter-spacing:0.218px;font-weight:700;left:11.7px;top:476px;">1.2.1</div>
<div class="t" style="font-size:14px;line-height:16px;height:16px;color:#1f2229;letter-spacing:0.273px;font-weight:700;left:88.5px;top:476px;">02010201</div>
<div class="t" style="font-size:14px;line-height:16px;height:16px;color:#1f2229;letter-spacing:-0.322px;font-weight:700;left:211.5px;top:476px;">Hệ thống khảo sát tình trạng mặt đườ...</div>
<div class="t" style="font-size:14px;line-height:16px;height:16px;color:#1f2229;letter-spacing:-0.132px;font-weight:700;left:777px;top:476px;">Hệ thống</div>
<div class="t" style="font-size:14px;line-height:16px;height:16px;color:#1f2229;letter-spacing:0.218px;font-weight:700;left:11.7px;top:515px;">1.2.2</div>
<div class="t" style="font-size:14px;line-height:16px;height:16px;color:#1f2229;letter-spacing:0.273px;font-weight:700;left:88.5px;top:515px;">02010202</div>
<div class="t" style="font-size:14px;line-height:16px;height:16px;color:#1f2229;letter-spacing:-0.428px;font-weight:700;left:211.5px;top:515px;">Hệ thống hồ sơ số hóa</div>
<div class="t" style="font-size:14px;line-height:16px;height:16px;color:#1f2229;letter-spacing:-0.132px;font-weight:700;left:777px;top:515px;">Hệ thống</div>
<div class="t" style="font-size:14px;line-height:16px;height:16px;color:#1f2229;letter-spacing:0.273px;font-weight:700;left:11.7px;top:553px;">2</div>
<div class="t" style="font-size:14px;line-height:16px;height:16px;color:#1f2229;letter-spacing:0.273px;font-weight:700;left:88.5px;top:553px;">0202</div>
<div class="t" style="font-size:14px;line-height:16px;height:16px;color:#1f2229;letter-spacing:-0.422px;font-weight:700;left:211.5px;top:553px;">Cầu đường bộ và các công trình phụ t...</div>
<div class="t" style="font-size:14px;line-height:16px;height:16px;color:#1f2229;letter-spacing:0.227px;font-weight:700;left:11.7px;top:592px;">2.1</div>
<div class="t" style="font-size:14px;line-height:16px;height:16px;color:#1f2229;letter-spacing:0.273px;font-weight:700;left:88.5px;top:592px;">020201</div>
<div class="t" style="font-size:14px;line-height:16px;height:16px;color:#1f2229;letter-spacing:-0.422px;font-weight:700;left:211.5px;top:592px;">Cầu đường bộ và các công trình phụ t...</div>
<div class="t" style="font-size:14px;line-height:16px;height:16px;color:#1f2229;letter-spacing:-0.129px;font-weight:700;left:777px;top:592px;">Cái</div>
<div class="t" style="font-size:14px;line-height:16px;height:16px;color:#1f2229;letter-spacing:-0.017px;font-weight:700;left:1327.1px;top:592px;">m2</div>
<div style="left:1510px;top:0px;width:98px;height:117px;background:#f5f5f5;"></div>
<div style="left:1510px;top:117px;width:98px;height:496px;background:#fff;"></div>
<div style="left:1510px;top:117px;width:98px;height:39px;background:#e8ebfd;"></div>
<div style="left:1510px;top:77px;width:98px;height:1px;background:#e2e2e2;"></div>
<div style="left:1510px;top:117px;width:98px;height:1px;background:#e7e7e7;"></div>
<div style="left:1510px;top:156px;width:98px;height:1px;background:#e7e7e7;"></div>
<div style="left:1510px;top:195px;width:98px;height:1px;background:#e7e7e7;"></div>
<div style="left:1510px;top:233px;width:98px;height:1px;background:#e7e7e7;"></div>
<div style="left:1510px;top:272px;width:98px;height:1px;background:#e7e7e7;"></div>
<div style="left:1510px;top:310px;width:98px;height:1px;background:#e7e7e7;"></div>
<div style="left:1510px;top:349px;width:98px;height:1px;background:#e7e7e7;"></div>
<div style="left:1510px;top:387px;width:98px;height:1px;background:#e7e7e7;"></div>
<div style="left:1510px;top:426px;width:98px;height:1px;background:#e7e7e7;"></div>
<div style="left:1510px;top:464px;width:98px;height:1px;background:#e7e7e7;"></div>
<div style="left:1510px;top:503px;width:98px;height:1px;background:#e7e7e7;"></div>
<div style="left:1510px;top:541px;width:98px;height:1px;background:#e7e7e7;"></div>
<div style="left:1510px;top:580px;width:98px;height:1px;background:#e7e7e7;"></div>
<div style="left:1510px;top:619px;width:98px;height:1px;background:#e7e7e7;"></div>
<div style="left:1510px;top:0px;width:1px;height:613px;background:#e7e7e7;"></div>
<div class="t" style="font-size:14px;line-height:16px;height:16px;color:#1f2229;letter-spacing:-0.646px;font-weight:700;left:1522.4px;top:30px;">Chức năng</div>
<svg style="left:1521px;top:239px" width="70" height="30" viewBox="1800 465 70 30"><g fill="none" stroke-width="1.200" stroke-linecap="round" stroke-linejoin="round"><g stroke="#2c50ec"><path d="M1819.400 473.400l2 2-8.200 8.200-2.600.600.600-2.600Z"/><path d="M1810.800 479.600c-1.600.200-2.200.800-2.200 2.400v1.600c0 1.900.9 2.800 2.800 2.800h7.400c1.900 0 2.800-.9 2.800-2.800v-1.800c0-1-.2-1.500-.800-2"/></g><g stroke="#d9411e"><path d="M1842.600 476.400h14.800M1846.600 476.200v-1.800c0-1.800.9-2.700 2.700-2.700h1.400c1.800 0 2.700.9 2.700 2.700v1.800M1844.400 476.800v6.600c0 2 1 3 3 3h5.200c2 0 3-1 3-3v-6.600M1848.300 478.600v4.400M1851.700 478.600v4.400"/></g></g></svg>
<div style="left:1601px;top:118px;width:7px;height:495px;background:#f1f1f1;"></div>
<div style="left:0px;top:613px;width:1608px;height:7px;background:#f0f0f0;"></div>
<div style="left:0px;top:613px;width:763px;height:7px;background:#d8d8d8;"></div>
<div style="left:0px;top:620px;width:1608px;height:40px;background:#fff;"></div>
<div class="t" style="font-size:14px;line-height:16px;height:16px;color:#1f2229;letter-spacing:0.035px;left:11.6px;top:633px;">Tổng số: <b>1</b> bản ghi</div>
</div>
<div style="left:1900px;top:620px;width:22px;height:301px;overflow:hidden;-webkit-mask-image:linear-gradient(180deg,transparent 16%,#000 40%,#000 90%,transparent 98%);mask-image:linear-gradient(180deg,transparent 16%,#000 40%,#000 90%,transparent 98%);"><div style="left:22px;top:40px;width:4px;height:260px;background:#000;box-shadow:0 0 9px 5px rgba(0,0,0,.36);"></div></div>
<div style="left:1904px;top:311px;width:18px;height:18px;background:#2c50ec;border-radius:2px 0 0 2px;"></div>
<svg style="left:1904px;top:311px" width="18" height="18" viewBox="0 0 18 18"><path d="M6.600 4.600l4.600 4.400-4.600 4.400" fill="none" stroke="#fff" stroke-width="1.700" stroke-linecap="round" stroke-linejoin="round"/></svg>
<div style="left:1860px;top:333px;width:62px;height:219px;background:#fff;border-radius:8px 0 4px 8px;box-shadow:0 0 4px rgba(0,0,0,.08);"></div>
<div style="left:1869px;top:341.9px;width:44px;height:44px;background:#2f52e6;border-radius:50%;"></div>
<div style="left:1869px;top:395.2px;width:44px;height:44px;background:linear-gradient(180deg,#1ccb7a,#0ea862);border-radius:50%;"></div>
<div style="left:1869px;top:446.8px;width:44px;height:44px;background:#0a36d4;border-radius:50%;"></div>
<div style="left:1869px;top:499.8px;width:44px;height:44px;background:#2f52e6;border-radius:50%;"></div>
<svg style="left:1860px;top:333px" width="62" height="220" viewBox="1860 333 62 220"><g fill="#fff"><path d="M1889.600 356.600l8.400 7.400-1.600 1.800-9 1.600-2.800 2.400-2-2.200 2.400-2.800Z"/><path d="M1884.200 367.800l3 3.400c.5.600 1.300.600 1.900.1.600-.5.600-1.300.1-1.900l-2.900-3.300Z" transform="translate(-1.200 1.400)"/><path d="M1889.600 368.600l2.600 2.900c.5.600 1.300.600 1.900.1.600-.5.600-1.300.1-1.900l-2.400-2.700Z"/></g><g stroke="#fff" stroke-width="1" stroke-linecap="round"><path d="M1894.400 357.400l.6-2.400M1896.400 359.400l2.200-2M1897.600 361.800l2.400-.400"/></g><path d="M1876.400 417.200c1.600-1 2-1.800 2.400-3.200 1.600-5.800 6.400-9.800 12.400-9.800s10.800 4 12.400 9.800c.4 1.400.8 2.200 2.400 3.200-1.600 1-2 1.800-2.400 3.200-1.600 5.800-6.400 9.800-12.400 9.800s-10.800-4-12.400-9.800c-.4-1.400-.8-2.200-2.400-3.200Z" fill="#fff"/><path d="M1891.200 408.400a8.800 8.800 0 1 1-.1 17.600h8.200l-2.200-2.400a8.800 8.800 0 0 0-5.900-15.200Z" fill="#12b469"/><circle cx="1891.200" cy="417.200" r="8.800" fill="#12b469"/><circle cx="1888" cy="417.200" r="1.700" fill="#fff"/><circle cx="1894.400" cy="417.200" r="1.700" fill="#fff"/><circle cx="1879.200" cy="461.400" r="5" fill="#cfe3fb"/><circle cx="1903.200" cy="461.400" r="5" fill="#cfe3fb"/><ellipse cx="1891.200" cy="470.600" rx="14.600" ry="12.400" fill="#f4f9ff"/><rect x="1880" y="464.800" width="22.400" height="13.400" rx="6.600" fill="#0a1266"/><circle cx="1885.800" cy="470.600" r="2.700" fill="#dfeaff"/><circle cx="1896.600" cy="470.600" r="2.700" fill="#dfeaff"/><circle cx="1885.800" cy="470.800" r="1.200" fill="#0a1266"/><circle cx="1896.600" cy="470.800" r="1.200" fill="#0a1266"/><path d="M1889.400 475.600c1.200.9 2.400.9 3.600 0" stroke="#fff" stroke-width=".9" fill="none" stroke-linecap="round"/><g fill="#fff"><circle cx="1891.100" cy="516.200" r="3.900"/><circle cx="1883" cy="515.700" r="2.900"/><circle cx="1899.400" cy="515.700" r="2.900"/><path d="M1885.200 529.200c0-5 2.200-8.200 6-8.200s6 3.200 6 8.200c0 1-.6 1.600-1.600 1.600h-8.800c-1 0-1.600-.6-1.600-1.600Z"/><path d="M1878.800 525.400c0-3.600 1.700-5.800 4.400-5.800 1 0 1.900.3 2.600.9-1.500 1.600-2.300 3.700-2.500 6.300h-3.300c-.8 0-1.200-.5-1.200-1.400ZM1903.400 525.400c0-3.600-1.700-5.800-4.400-5.800-1 0-1.900.3-2.600.9 1.500 1.600 2.300 3.700 2.500 6.300h3.300c.8 0 1.200-.5 1.200-1.400Z"/></g></svg>
<div style="left:1863.1px;top:494px;width:20.6px;height:20.6px;background:rgba(255,196,90,.45);border-radius:50%;"></div>
<div style="left:1867px;top:497.9px;width:12.8px;height:12.8px;background:#ffa60f;border-radius:50%;"></div>
</body></html>
